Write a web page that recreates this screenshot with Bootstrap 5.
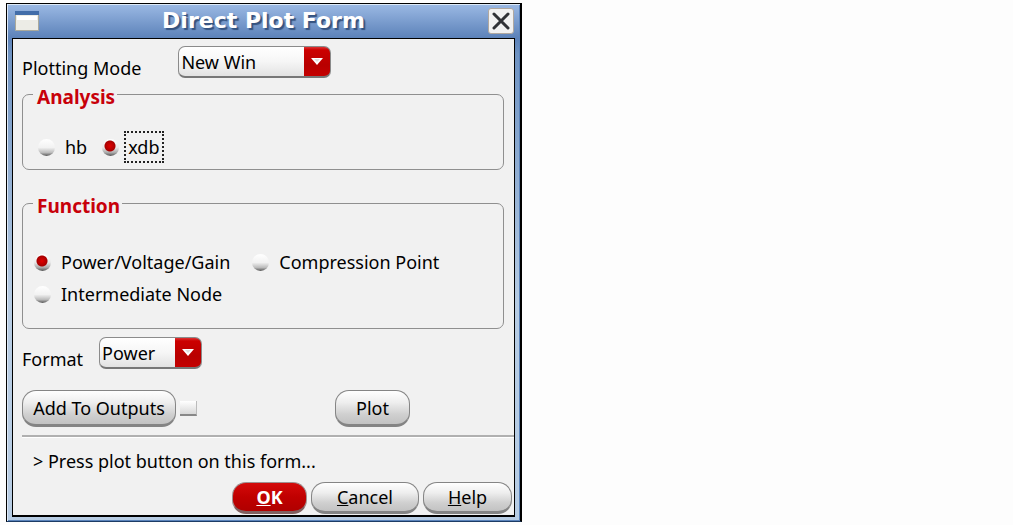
<!DOCTYPE html>
<html lang="en">
<head>
<meta charset="utf-8">
<meta name="viewport" content="width=device-width, initial-scale=1">
<title>Direct Plot Form</title>
<link href="https://cdn.jsdelivr.net/npm/bootstrap@5.3.0/dist/css/bootstrap.min.css" rel="stylesheet">
<style>
  body { background: #fdfdfd; color: #000; font: 18px/24px "Noto Sans", "Open Sans", sans-serif; }
  .window { max-width: 516px; margin: 3px 6px; border: 1px solid #000; border-right-width: 2px; border-bottom-color: #1d3c66;
    background: linear-gradient(#9bb9e4, #5c82b9 34px, #6f93c2 50px, #b7cce3 300px); padding: 0 5px 4px 5px;
    box-shadow: inset 1px 1px #dde9f7, inset -1px -1px #5a83bb; }
  .title-bar { height: 34px; padding: 0 1px 0 3px; }
  .title-bar h1 { font: bold 22px/32px "DejaVu Sans", sans-serif; color: #fff; text-shadow: 2px 2px 1px #34527f; }
  .close-btn { width: 26px; height: 26px; border: 1px solid #b0a8a0; border-radius: 3px; background: #f1f1f1; line-height: 0; }
  .pane { background: #f1f1f1; border: 1px solid #000; border-width: 1px 1px 2px 1px; padding: 7px 2px 1px 9px; }
  .pick { appearance: none; height: 32px; border: 1px solid #8b8b8b; border-bottom: 2px solid #777; border-radius: 7px; padding: 0 30px 0 2px; font-size: 18px; color: #000;
    background: url("data:image/svg+xml,%3Csvg xmlns='http://www.w3.org/2000/svg' width='12' height='8'%3E%3Cpath d='M0 0h12L6 7z' fill='%23fff'/%3E%3Cpath d='M3 1h6L6 4z' fill='%23ddd'/%3E%3C/svg%3E") right 7px top 11px no-repeat,
      linear-gradient(#d33 0, #c00 3px, #b80000 18px, #c40000) right / 26px 100% no-repeat, linear-gradient(#fff, #f6f6f6 50%, #e2e2e2); }
  .pick-wide { width: 153px; margin-left: 37px; }
  .pick-narrow { width: 103px; }
  .row-label { padding-top: 12px; line-height: 20px; }
  .group { border: 1px solid #8f8f8f; border-radius: 7px; margin-right: 8px; }
  .group legend { font-size: 19px; line-height: 26px; font-weight: 700; color: #c8000a; margin: 0; padding: 6px 2px 0 4px; }
  .analysis { min-height: 92px; padding: 21px 0 0 15px; }
  .functions { min-height: 142px; margin-top: 17px; padding: 31px 0 0 11px; }
  .analysis legend { margin-left: -5px; }
  .functions legend { margin-left: -1px; }
  .choices { column-gap: 10px; }
  .analysis label + .dot { margin-left: 5px; }
  .functions label + .dot { margin-left: 12px; }
  .dot { appearance: none; flex: none; width: 17px; height: 17px; margin: 0; border-radius: 50%;
    background: linear-gradient(#fff, #f2f2f2 50%, #bbb 80%, #555); }
  .dot:checked { background: radial-gradient(circle at 8px 7px, #e00000 0, #a80000 5px, transparent 6px), linear-gradient(#fff, #e8e8e8 50%, #aaa 80%, #555); }
  .focused { outline: 2px dotted #222; outline-offset: -2px; padding: 4px; margin-left: -5px; }
  .tick { appearance: none; width: 17px; height: 15px; margin: 0; background: linear-gradient(#fff, #d8d8d8); border-right: 1px solid #bbb; border-bottom: 2px solid #888; }
  .pill { border: 1px solid #858585; border-bottom: 3px solid #848484; border-radius: 14px; background: linear-gradient(#fff, #eee 35%, #d0d0d0 70%, #c2c2c2); color: #000; font-size: 18px; }
  .pill-lg { height: 37px; }
  .pill-sm { height: 32px; }
  .pill-ok { background: linear-gradient(#d40a0a, #c00000 50%, #b00000); border-color: #a09090; border-bottom-color: #806060; color: #fff; font-weight: 700; }
  .w-add { width: 154px; } .w-plot { width: 75px; margin-left: 138px; } .w-ok { width: 75px; } .w-cancel { width: 108px; } .w-help { width: 89px; }
  .actions { padding-top: 21px; }
  .rule { border-top: 2px solid #b0b0b0; border-bottom: 1px solid #fff; margin-top: 8px; margin-right: -2px; }
  .hint { padding: 11px 0 9px 11px; }
</style>
</head>
<body>
<main class="window">
  <header class="title-bar d-flex align-items-center">
    <svg width="24" height="20" viewBox="0 0 24 20" aria-hidden="true"><path d="M.5.5h23v19H.5z" fill="#ecece6" stroke="#aaa99b"/><path d="M0 0h24v4H0z" fill="#426da9"/><path d="M2 5h20v4H2z" fill="#fff"/></svg>
    <h1 class="flex-grow-1 text-center m-0">Direct Plot Form</h1>
    <button type="button" class="close-btn p-0" aria-label="Close"><svg width="20" height="20" viewBox="0 0 20 20"><path d="M3 3l14 14M17 3L3 17" stroke="#303236" stroke-width="3" stroke-linecap="round"/></svg></button>
  </header>
  <form class="pane">
    <div class="d-flex">
      <label for="mode" class="row-label">Plotting Mode</label>
      <select id="mode" class="pick pick-wide"><option>New Win</option></select>
    </div>
    <fieldset class="group analysis">
      <legend class="float-none w-auto">Analysis</legend>
      <div class="choices d-flex align-items-center">
        <input class="dot" type="radio" name="analysis" id="hb"><label for="hb">hb</label>
        <input class="dot" type="radio" name="analysis" id="xdb" checked><label for="xdb" class="focused">xdb</label>
      </div>
    </fieldset>
    <fieldset class="group functions">
      <legend class="float-none w-auto">Function</legend>
      <div class="choices d-flex align-items-center mb-2">
        <input class="dot" type="radio" name="fn" id="pvg" checked><label for="pvg">Power/Voltage/Gain</label>
        <input class="dot" type="radio" name="fn" id="cp"><label for="cp">Compression Point</label>
      </div>
      <div class="choices d-flex align-items-center">
        <input class="dot" type="radio" name="fn" id="node"><label for="node">Intermediate Node</label>
      </div>
    </fieldset>
    <div class="d-flex mt-2">
      <label for="format" class="row-label me-3">Format</label>
      <select id="format" class="pick pick-narrow"><option>Power</option></select>
    </div>
    <div class="actions d-flex align-items-center">
      <button type="button" class="pill pill-lg w-add p-0">Add To Outputs</button>
      <input class="tick ms-1" type="checkbox" aria-label="Add to outputs">
      <button type="button" class="pill pill-lg w-plot p-0">Plot</button>
    </div>
    <div class="rule"></div>
    <div class="hint">&gt; Press plot button on this form...</div>
    <div class="d-flex justify-content-end gap-1">
      <button type="button" class="pill pill-sm pill-ok w-ok p-0"><u>O</u>K</button>
      <button type="button" class="pill pill-sm w-cancel p-0"><u>C</u>ancel</button>
      <button type="button" class="pill pill-sm w-help p-0"><u>H</u>elp</button>
    </div>
  </form>
</main>
<script src="https://cdn.jsdelivr.net/npm/bootstrap@5.3.0/dist/js/bootstrap.bundle.min.js"></script>
</body>
</html>
